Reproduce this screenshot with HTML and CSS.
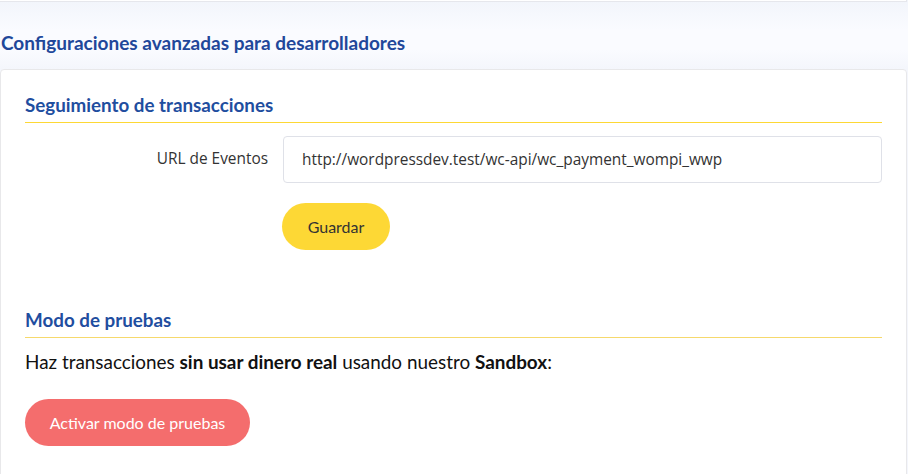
FILE: index.html
```html
<!DOCTYPE html>
<html lang="es">
<head>
<meta charset="utf-8">
<title>Configuraciones avanzadas</title>
<link rel="stylesheet" href="styles.css">
</head>
<body>
<div class="top-card"></div>
<h2 class="page-title">Configuraciones avanzadas para desarrolladores</h2>
<section class="card">
  <h3 class="section-title">Seguimiento de transacciones</h3>
  <div class="form-row">
    <label class="form-label" for="url">URL de Eventos</label>
    <input class="form-input" id="url" type="text" value="http://wordpressdev.test/wc-api/wc_payment_wompi_wwp" readonly>
  </div>
  <div class="form-actions">
    <button class="btn btn-yellow" type="button">Guardar</button>
  </div>
  <h3 class="section-title section-title--soft">Modo de pruebas</h3>
  <p class="sandbox-text">Haz transacciones <strong>sin usar dinero real</strong> usando nuestro <strong>Sandbox</strong>:</p>
  <button class="btn btn-red" type="button">Activar modo de pruebas</button>
</section>
</body>
</html>
```
FILE: styles.css
```css
* { box-sizing: border-box; }
html, body { height: 100%; }
body {
  margin: 0;
  width: 907px;
  background: linear-gradient(to bottom, #f2f5fb 0px, #fafbff 30px, #fafbff 50px, #f4f6fc 69px);
  font-family: Lato, "Noto Sans", sans-serif;
  overflow: hidden;
}
.top-card {
  height: 2px;
  background: #fff;
  border-bottom: 1px solid #e6e7ec;
  border-right: 1px solid #e6e7ec;
}
.page-title {
  margin: 0;
  padding: 29px 0 0 1px;
  height: 67px;
  font-size: 19px;
  font-weight: 700;
  color: #21479a;
  line-height: 24px;
}
.card {
  background: #fff;
  border: 1px solid #e8e8ea;
  border-radius: 4px;
  padding: 22px 24px 30px 24px;
  min-height: 420px;
}
.section-title {
  margin: 0;
  font-size: 18.8px;
  font-weight: 700;
  color: #1f4e9f;
  line-height: 26px;
  padding-bottom: 4px;
  border-bottom: 1.5px solid #fdd835;
}
.section-title--soft {
  margin-top: 57px;
  border-bottom: 1px solid #f6d96c;
}
.form-row {
  display: flex;
  align-items: flex-start;
  gap: 15px;
  margin-top: 13px;
}
.form-label {
  width: 243px;
  text-align: right;
  font-family: "Open Sans", sans-serif;
  font-size: 15.4px;
  color: #333;
  padding-top: 12px;
}
.form-input {
  flex: 1;
  height: 47px;
  border: 1px solid #dfe1e8;
  border-radius: 4px;
  padding: 0 18px;
  font-family: "Open Sans", sans-serif;
  font-size: 15.4px;
  color: #333;
  outline: none;
}
.form-actions {
  padding-left: 257px;
  margin-top: 20px;
}
.btn {
  border: none;
  height: 47px;
  border-radius: 24px;
  font-family: Lato, "Noto Sans", sans-serif;
  font-size: 16px;
}
.btn-yellow {
  width: 108px;
  background: #fdd835;
  color: #333;
}
.sandbox-text {
  margin: 12px 0 0 0;
  font-size: 18.9px;
  color: #111;
  line-height: 24px;
}
.btn-red {
  display: block;
  margin-top: 25px;
  width: 225px;
  background: #f46d6d;
  color: #fff;
}
```
